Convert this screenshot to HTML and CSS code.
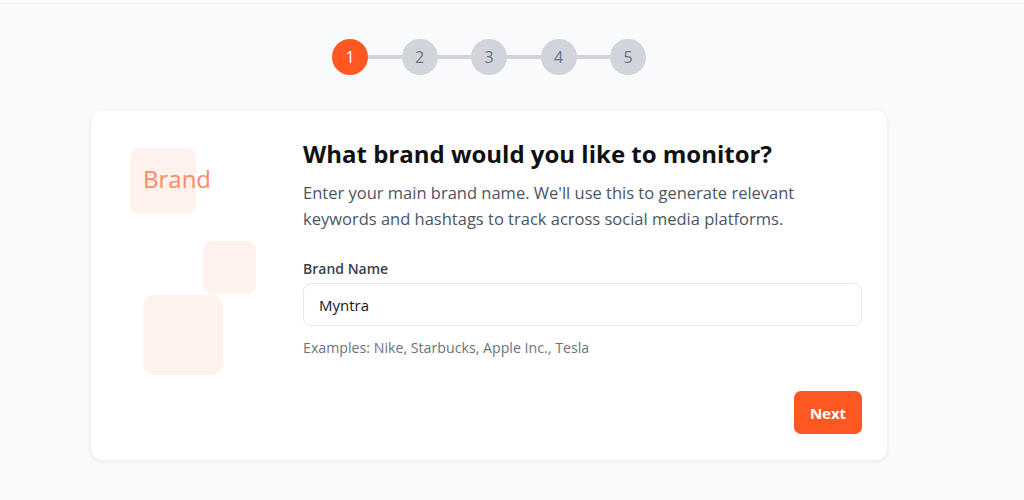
FILE: index.html
```html
<!DOCTYPE html>
<html lang="en">
<head>
<meta charset="utf-8">
<title>Brand setup</title>
<link rel="stylesheet" href="styles.css">
</head>
<body>
<div class="topbar"></div>
<main class="page">
  <ol class="stepper">
    <li class="step active">1</li>
    <li class="line"></li>
    <li class="step">2</li>
    <li class="line"></li>
    <li class="step">3</li>
    <li class="line"></li>
    <li class="step">4</li>
    <li class="line"></li>
    <li class="step">5</li>
  </ol>
  <section class="card">
    <div class="visual">
      <div class="sq sq1"></div>
      <span class="brand-word">Brand</span>
      <div class="sq sq2"></div>
      <div class="sq sq3"></div>
    </div>
    <div class="content">
      <h1 class="title">What brand would you like to monitor?</h1>
      <p class="desc">Enter your main brand name. We'll use this to generate relevant keywords and hashtags to track across social media platforms.</p>
      <label class="label" for="brand">Brand Name</label>
      <input class="input" id="brand" type="text" value="Myntra">
      <p class="hint">Examples: Nike, Starbucks, Apple Inc., Tesla</p>
      <div class="actions">
        <button class="btn" type="button">Next</button>
      </div>
    </div>
  </section>
</main>
</body>
</html>
```

FILE: styles.css
```css
* { box-sizing: border-box; }
html, body { margin: 0; padding: 0; }
body {
  background: #f9fafb;
  font-family: "Open Sans", "Noto Sans", sans-serif;
  color: #111827;
  height: 500px;
  overflow: hidden;
}
.topbar {
  height: 4px;
  border-bottom: 1px solid #eef0f3;
  background: #f9fafb;
}
.page {
  display: flex;
  flex-direction: column;
  align-items: center;
  padding-right: 46px;
}
.stepper {
  list-style: none;
  margin: 35px 0 0;
  padding: 0;
  display: flex;
  align-items: center;
}
.step {
  width: 36px;
  height: 36px;
  border-radius: 50%;
  background: #d1d5db;
  color: #6b7280;
  display: flex;
  align-items: center;
  justify-content: center;
  font-size: 16px;
}
.step.active {
  background: #ff5722;
  color: #fff;
}
.line {
  width: 33.5px;
  height: 4px;
  background: #d1d5db;
}
.card {
  margin-top: 34px;
  width: 798px;
  height: 352px;
  background: #fff;
  border-radius: 12px;
  box-shadow: 0 1px 3px rgba(0,0,0,0.06);
  border: 1px solid #f1f2f4;
  display: flex;
  padding: 0 25px 26px 0;
}
.visual {
  position: relative;
  width: 212px;
  flex: none;
}
.sq {
  position: absolute;
  background: #fff1ec;
  border-radius: 9px;
}
.sq1 { left: 39px; top: 38px; width: 66px; height: 66px; }
.sq2 { left: 112px; top: 131px; width: 53px; height: 53px; opacity: 0.9; }
.sq3 { left: 52px; top: 185px; width: 80px; height: 80px; border-radius: 12px; }
.brand-word {
  position: absolute;
  left: 52px;
  top: 53px;
  font-size: 24px;
  color: #ff8a65;
  line-height: 32px;
}
.content {
  flex: 1;
  display: flex;
  flex-direction: column;
  padding-top: 28px;
}
.title {
  margin: 0;
  font-size: 24px;
  line-height: 32px;
  font-weight: 700;
  color: #111;
}
.desc {
  margin: 10px 0 0;
  font-size: 16.5px;
  line-height: 26px;
  color: #4b5563;
}
.label {
  margin-top: 27px;
  font-size: 14px;
  font-weight: 600;
  color: #374151;
  line-height: 20px;
}
.input {
  margin-top: 4px;
  height: 43px;
  width: 100%;
  border: 1px solid #e5e7eb;
  border-radius: 8px;
  padding: 0 15px;
  font-family: inherit;
  font-size: 15px;
  color: #111827;
  background: #fff;
  outline: none;
}
.hint {
  margin: 12px 0 0;
  font-size: 14.2px;
  line-height: 20px;
  color: #6b7280;
}
.actions {
  margin-top: auto;
  display: flex;
  justify-content: flex-end;
}
.btn {
  width: 68px;
  height: 43px;
  border: none;
  border-radius: 7px;
  background: #ff5722;
  color: #fff;
  font-family: inherit;
  font-size: 15px;
  font-weight: 700;
}
```
